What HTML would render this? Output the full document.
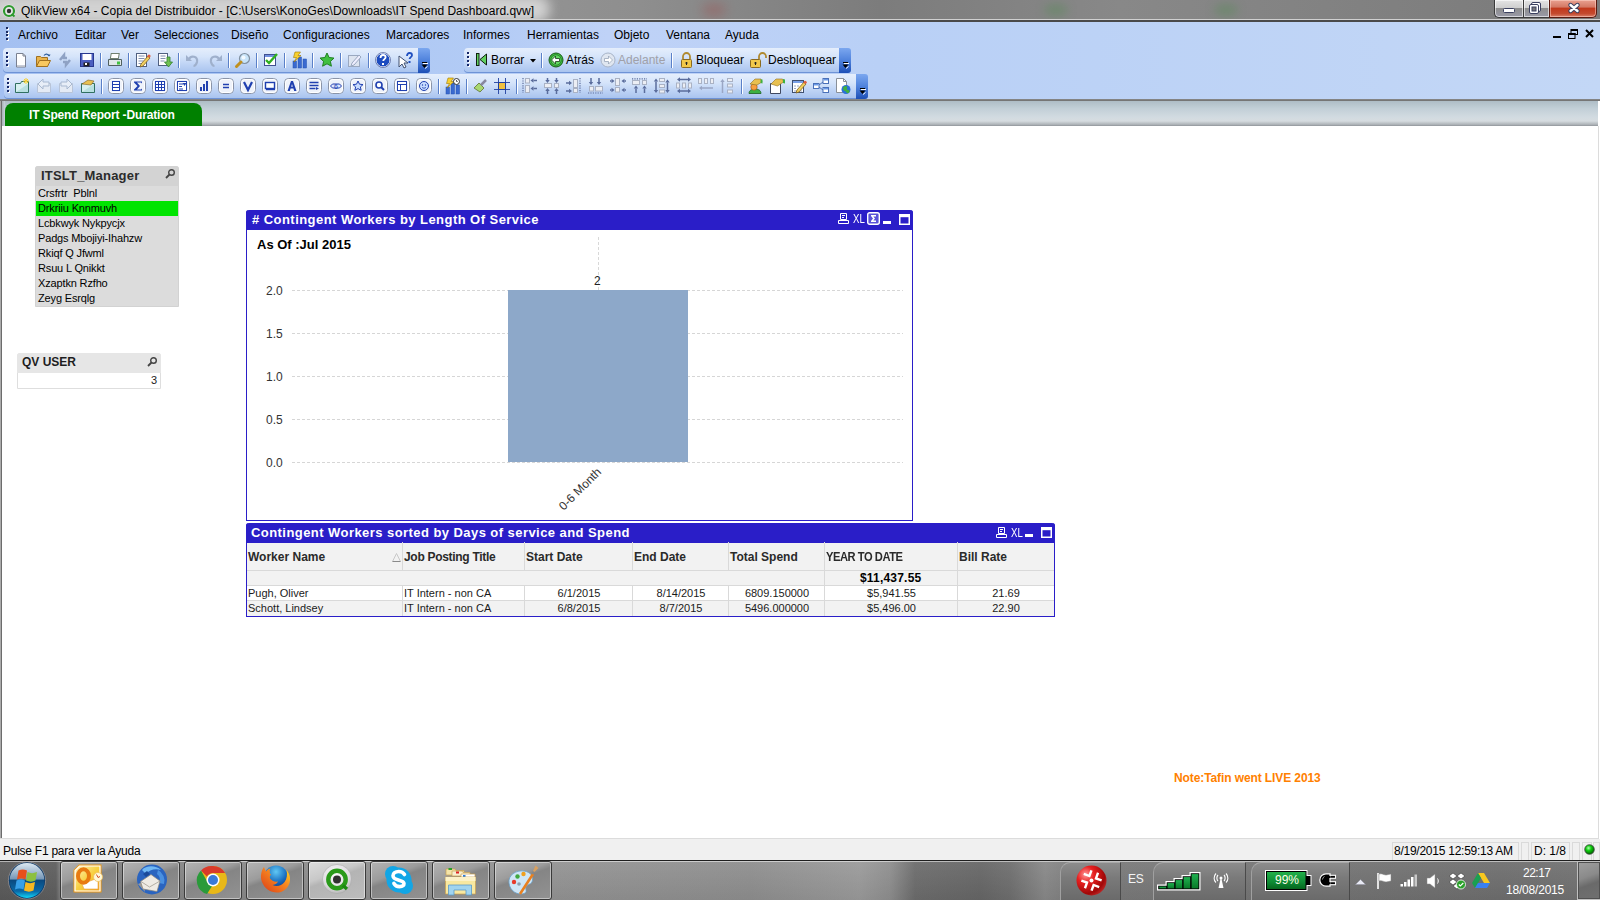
<!DOCTYPE html><html><head><meta charset="utf-8"><style>
*{margin:0;padding:0;box-sizing:border-box}
html,body{width:1600px;height:900px;overflow:hidden;background:#fff;font-family:"Liberation Sans",sans-serif;position:relative}
.a{position:absolute}
.t{position:absolute;white-space:nowrap;line-height:1}
svg{position:absolute;overflow:visible}
</style></head><body><div class="a" style="left:0;top:0;width:1600px;height:22px;overflow:hidden;background:linear-gradient(90deg,#a8a8a8 0,#8e8e8e 40%,#7c7c7c 55%,#888 70%,#7a7a7a 100%)"><div class="a" style="left:-10px;top:-5px;width:560px;height:28px;background:#d2d2d2;border-radius:14px;filter:blur(6px)"></div><div class="a" style="left:702px;top:4px;width:24px;height:12px;background:#9a5a5a;border-radius:50%;filter:blur(6px);opacity:.6"></div><div class="a" style="left:1044px;top:4px;width:24px;height:12px;background:#5a8a5a;border-radius:50%;filter:blur(5px);opacity:.5"></div><div class="a" style="left:1214px;top:4px;width:24px;height:12px;background:#5a8a5a;border-radius:50%;filter:blur(5px);opacity:.5"></div></div>
<div class="a" style="left:0px;top:19px;width:1600px;height:1px;background:#d0d0d0"></div>
<div class="a" style="left:0px;top:20px;width:1600px;height:2px;background:#4a4a4a"></div>
<svg style="left:2px;top:4px" width="14" height="14" viewBox="0 0 14 14"><circle cx="7" cy="7" r="6.5" fill="#e8e8e8"/><circle cx="7" cy="7" r="5" fill="none" stroke="#2e9a2e" stroke-width="2.2"/><circle cx="7" cy="7" r="2.2" fill="#333"/><path d="M9.5 10l3 2.5" stroke="#2e9a2e" stroke-width="2"/></svg>
<div class="t" style="left:21px;top:5px;font-size:12px;color:#000;font-weight:normal;">QlikView x64 - Copia del Distribuidor - [C:\Users\KonoGes\Downloads\IT Spend Dashboard.qvw]</div>
<div class="a" style="left:1494px;top:0px;width:29px;height:18px;border:1px solid #3a3a3a;border-top:none;border-right:none;border-radius:0 0 0 5px;background:linear-gradient(#e4e4e4 0,#cfcfcf 45%,#8e8e8e 50%,#9a9aa8 100%);box-shadow:inset 0 0 0 1px rgba(255,255,255,.6)"></div>
<div class="a" style="left:1523px;top:0px;width:26px;height:18px;border-bottom:1px solid #3a3a3a;border-left:1px solid #3a3a3a;background:linear-gradient(#e4e4e4 0,#cfcfcf 45%,#8e8e8e 50%,#9a9aa8 100%);box-shadow:inset 0 0 0 1px rgba(255,255,255,.6)"></div>
<div class="a" style="left:1549px;top:0px;width:48px;height:18px;border:1px solid #5a1a10;border-top:none;border-radius:0 0 5px 0;background:linear-gradient(#e9a090 0,#d47a66 40%,#c1391d 50%,#c44a2e 80%,#d9826c 100%);box-shadow:inset 0 0 0 1px rgba(255,220,210,.5)"></div>
<svg style="left:1503px;top:8px" width="12" height="5" viewBox="0 0 12 5"><rect x="0.5" y="0.5" width="11" height="4" rx="1" fill="#fff" stroke="#3b4060"/></svg>
<svg style="left:1529px;top:2px" width="12" height="12" viewBox="0 0 12 12"><rect x="2.5" y="0.5" width="9" height="9" rx="1.5" fill="#fff" stroke="#3b4060"/><rect x="0.5" y="2.5" width="9" height="9" rx="1.5" fill="#fff" stroke="#3b4060"/><rect x="3" y="5" width="4" height="4" fill="#777" stroke="#3b4060"/></svg>
<svg style="left:1568px;top:3px" width="12" height="10" viewBox="0 0 12 10"><path d="M2.5 2l7 6M9.5 2l-7 6" stroke="#3b4060" stroke-width="4.4" stroke-linecap="round"/><path d="M2.5 2l7 6M9.5 2l-7 6" stroke="#fff" stroke-width="2.4" stroke-linecap="round"/></svg>
<div class="a" style="left:0px;top:22px;width:1600px;height:77px;background:linear-gradient(90deg,#a4c0f1 0,#b2cbf5 30%,#bfd2f7 38%,#b9d0f6 55%,#c3d7f6 100%)"></div>
<div class="a" style="left:6px;top:27px;width:2px;height:2px;background:#1a2a60;box-shadow:1px 1px 0 #fff"></div>
<div class="a" style="left:6px;top:31px;width:2px;height:2px;background:#1a2a60;box-shadow:1px 1px 0 #fff"></div>
<div class="a" style="left:6px;top:34px;width:2px;height:2px;background:#1a2a60;box-shadow:1px 1px 0 #fff"></div>
<div class="a" style="left:6px;top:38px;width:2px;height:2px;background:#1a2a60;box-shadow:1px 1px 0 #fff"></div>
<div class="t" style="left:18px;top:29px;font-size:12px;color:#000;font-weight:normal;">Archivo</div>
<div class="t" style="left:75px;top:29px;font-size:12px;color:#000;font-weight:normal;">Editar</div>
<div class="t" style="left:121px;top:29px;font-size:12px;color:#000;font-weight:normal;">Ver</div>
<div class="t" style="left:154px;top:29px;font-size:12px;color:#000;font-weight:normal;">Selecciones</div>
<div class="t" style="left:231px;top:29px;font-size:12px;color:#000;font-weight:normal;">Diseño</div>
<div class="t" style="left:283px;top:29px;font-size:12px;color:#000;font-weight:normal;">Configuraciones</div>
<div class="t" style="left:386px;top:29px;font-size:12px;color:#000;font-weight:normal;">Marcadores</div>
<div class="t" style="left:463px;top:29px;font-size:12px;color:#000;font-weight:normal;">Informes</div>
<div class="t" style="left:527px;top:29px;font-size:12px;color:#000;font-weight:normal;">Herramientas</div>
<div class="t" style="left:614px;top:29px;font-size:12px;color:#000;font-weight:normal;">Objeto</div>
<div class="t" style="left:666px;top:29px;font-size:12px;color:#000;font-weight:normal;">Ventana</div>
<div class="t" style="left:725px;top:29px;font-size:12px;color:#000;font-weight:normal;">Ayuda</div>
<div class="a" style="left:1553px;top:36px;width:8px;height:2px;background:#000"></div>
<svg style="left:1568px;top:29px" width="10" height="10" viewBox="0 0 10 10"><rect x="3" y="0.5" width="6.5" height="5" fill="none" stroke="#000"/><rect x="3" y="0" width="7" height="2" fill="#000"/><rect x="0.5" y="4.5" width="6.5" height="5" fill="#c3d6f7" stroke="#000"/><rect x="0" y="4" width="7.5" height="2" fill="#000"/></svg>
<svg style="left:1585px;top:29px" width="9" height="9" viewBox="0 0 9 9"><path d="M1 1l7 7M8 1l-7 7" stroke="#000" stroke-width="2"/></svg>
<div class="a" style="left:3px;top:48px;width:416px;height:25px;background:linear-gradient(180deg,#e5eefc 0,#d5e4fa 35%,#c2d6f6 60%,#a7c2ee 100%);border-radius:4px 0 0 4px;box-shadow:inset 0 -1px 0 #6e93d6"></div>
<div class="a" style="left:6px;top:52px;width:2px;height:2px;background:#142668;box-shadow:1px 1px 0 #fff"></div>
<div class="a" style="left:6px;top:56px;width:2px;height:2px;background:#142668;box-shadow:1px 1px 0 #fff"></div>
<div class="a" style="left:6px;top:60px;width:2px;height:2px;background:#142668;box-shadow:1px 1px 0 #fff"></div>
<div class="a" style="left:6px;top:64px;width:2px;height:2px;background:#142668;box-shadow:1px 1px 0 #fff"></div>
<div class="a" style="left:418px;top:48px;width:12px;height:25px;background:linear-gradient(180deg,#7ba7ef 0,#4f82dc 50%,#1d4fb6 100%);border-radius:0 3px 3px 0"></div>
<div class="a" style="left:422px;top:62px;width:5px;height:1px;background:#000;box-shadow:1px 1px 0 #fff"></div>
<svg style="left:421px;top:64px" width="7" height="5" viewBox="0 0 7 5"><path d="M0.5 0.5h6l-3 3.5z" fill="#000"/><path d="M4 4.5l2.5-2" stroke="#fff"/></svg>
<div class="a" style="left:464px;top:48px;width:376px;height:25px;background:linear-gradient(180deg,#e5eefc 0,#d5e4fa 35%,#c2d6f6 60%,#a7c2ee 100%);border-radius:4px 0 0 4px;box-shadow:inset 0 -1px 0 #6e93d6"></div>
<div class="a" style="left:467px;top:52px;width:2px;height:2px;background:#142668;box-shadow:1px 1px 0 #fff"></div>
<div class="a" style="left:467px;top:56px;width:2px;height:2px;background:#142668;box-shadow:1px 1px 0 #fff"></div>
<div class="a" style="left:467px;top:60px;width:2px;height:2px;background:#142668;box-shadow:1px 1px 0 #fff"></div>
<div class="a" style="left:467px;top:64px;width:2px;height:2px;background:#142668;box-shadow:1px 1px 0 #fff"></div>
<div class="a" style="left:839px;top:48px;width:12px;height:25px;background:linear-gradient(180deg,#7ba7ef 0,#4f82dc 50%,#1d4fb6 100%);border-radius:0 3px 3px 0"></div>
<div class="a" style="left:843px;top:62px;width:5px;height:1px;background:#000;box-shadow:1px 1px 0 #fff"></div>
<svg style="left:842px;top:64px" width="7" height="5" viewBox="0 0 7 5"><path d="M0.5 0.5h6l-3 3.5z" fill="#000"/><path d="M4 4.5l2.5-2" stroke="#fff"/></svg>
<div class="a" style="left:4px;top:74px;width:853px;height:25px;background:linear-gradient(180deg,#e5eefc 0,#d5e4fa 35%,#c2d6f6 60%,#a7c2ee 100%);border-radius:4px 0 0 4px;box-shadow:inset 0 -1px 0 #6e93d6"></div>
<div class="a" style="left:7px;top:78px;width:2px;height:2px;background:#142668;box-shadow:1px 1px 0 #fff"></div>
<div class="a" style="left:7px;top:82px;width:2px;height:2px;background:#142668;box-shadow:1px 1px 0 #fff"></div>
<div class="a" style="left:7px;top:86px;width:2px;height:2px;background:#142668;box-shadow:1px 1px 0 #fff"></div>
<div class="a" style="left:7px;top:90px;width:2px;height:2px;background:#142668;box-shadow:1px 1px 0 #fff"></div>
<div class="a" style="left:856px;top:74px;width:12px;height:25px;background:linear-gradient(180deg,#7ba7ef 0,#4f82dc 50%,#1d4fb6 100%);border-radius:0 3px 3px 0"></div>
<div class="a" style="left:860px;top:88px;width:5px;height:1px;background:#000;box-shadow:1px 1px 0 #fff"></div>
<svg style="left:859px;top:90px" width="7" height="5" viewBox="0 0 7 5"><path d="M0.5 0.5h6l-3 3.5z" fill="#000"/><path d="M4 4.5l2.5-2" stroke="#fff"/></svg>
<svg style="left:13px;top:52px" width="16" height="16" viewBox="0 0 16 16"><path d="M3.5 1.5h6.5l2.5 2.5v11h-9z" fill="#fff" stroke="#7a8090"/><path d="M10 1.5v2.5h2.5" fill="none" stroke="#7a8090"/><path d="M4 13.5h8" stroke="#c8ccd8"/></svg>
<svg style="left:35px;top:52px" width="16" height="16" viewBox="0 0 16 16"><path d="M1.5 4.5h4l1 1h6v9h-11z" fill="#e9b44c" stroke="#a07020"/><path d="M1.5 14.5l3-6h11l-3 6z" fill="#f8c860" stroke="#a07020"/><path d="M9 3.5c1.5-2 4-2 5 0.5" fill="none" stroke="#3060a0" stroke-width="1.2"/><path d="M13 2.5l1.5 2 1-2" fill="#3060a0"/></svg>
<svg style="left:57px;top:52px" width="16" height="16" viewBox="0 0 16 16"><path d="M3 8l4-5v3h3M13 8l-4 5v-3h-3" fill="none" stroke="#8fa2c4" stroke-width="2.5"/></svg>
<svg style="left:79px;top:52px" width="16" height="16" viewBox="0 0 16 16"><rect x="1.5" y="1.5" width="13" height="13" fill="#4c5fc0" stroke="#283890"/><rect x="3.5" y="2" width="9" height="6" fill="#fff"/><rect x="4.5" y="10.5" width="6" height="4" fill="#222"/><rect x="6" y="11" width="2" height="2" fill="#fff"/></svg>
<div class="a" style="left:100px;top:53px;width:1px;height:15px;background:#5a80c8;box-shadow:1px 0 0 #fff"></div>
<svg style="left:107px;top:52px" width="16" height="16" viewBox="0 0 16 16"><rect x="4.5" y="1.5" width="8" height="5" fill="#fff" stroke="#708070" transform="skewX(-10)"/><path d="M1.5 7.5h13v6h-13z" fill="#dfe8e8" stroke="#506060"/><rect x="10" y="9.5" width="3" height="3" fill="#40c040"/></svg>
<div class="a" style="left:128px;top:53px;width:1px;height:15px;background:#5a80c8;box-shadow:1px 0 0 #fff"></div>
<svg style="left:135px;top:52px" width="16" height="16" viewBox="0 0 16 16"><rect x="1.5" y="1.5" width="10" height="13" fill="#fff" stroke="#506080"/><path d="M3.5 4h6M3.5 6.5h6M3.5 9h5M3.5 11.5h5" stroke="#8090b0"/><path d="M6 12l7-8 2 2-7 8-3 1z" fill="#f0d060" stroke="#806020" stroke-width=".8"/><circle cx="14" cy="4" r="1.6" fill="#e06040"/></svg>
<svg style="left:157px;top:52px" width="16" height="16" viewBox="0 0 16 16"><rect x="1.5" y="1.5" width="9" height="12" fill="#fff" stroke="#506080"/><path d="M3.5 4h5M3.5 6.5h5M3.5 9h4" stroke="#8090b0"/><path d="M10 5h3v5h2.5l-4 5-4-5h2.5z" fill="#70c050" stroke="#308030" stroke-width=".8"/></svg>
<div class="a" style="left:178px;top:53px;width:1px;height:15px;background:#5a80c8;box-shadow:1px 0 0 #fff"></div>
<svg style="left:185px;top:52px" width="16" height="16" viewBox="0 0 16 16"><path d="M4 7c2-4 9-3 8 3-.5 2-2 4-3.5 4" fill="none" stroke="#9fb0cc" stroke-width="2.2"/><path d="M1 3v6h6z" fill="#9fb0cc"/></svg>
<svg style="left:207px;top:52px" width="16" height="16" viewBox="0 0 16 16"><path d="M12 7c-2-4-9-3-8 3 .5 2 2 4 3.5 4" fill="none" stroke="#9fb0cc" stroke-width="2.2"/><path d="M15 3v6h-6z" fill="#9fb0cc"/></svg>
<div class="a" style="left:228px;top:53px;width:1px;height:15px;background:#5a80c8;box-shadow:1px 0 0 #fff"></div>
<svg style="left:235px;top:52px" width="16" height="16" viewBox="0 0 16 16"><circle cx="9.5" cy="6.5" r="5" fill="#c8e4fa" stroke="#8090a0" stroke-width="1.2"/><circle cx="8.5" cy="5.5" r="2" fill="#fff" opacity=".8"/><path d="M6 10l-4.5 4.5" stroke="#c09020" stroke-width="3" stroke-linecap="round"/></svg>
<div class="a" style="left:256px;top:53px;width:1px;height:15px;background:#5a80c8;box-shadow:1px 0 0 #fff"></div>
<svg style="left:263px;top:52px" width="16" height="16" viewBox="0 0 16 16"><rect x="1.5" y="2.5" width="11" height="11" fill="#fff" stroke="#405090"/><rect x="2" y="3" width="10" height="2" fill="#7090e0"/><path d="M3 8l3 3 8-9" fill="none" stroke="#30b020" stroke-width="2.4"/></svg>
<div class="a" style="left:284px;top:53px;width:1px;height:15px;background:#5a80c8;box-shadow:1px 0 0 #fff"></div>
<svg style="left:291px;top:52px" width="16" height="16" viewBox="0 0 16 16"><rect x="2" y="9" width="3.5" height="7" fill="#3a6ad0" stroke="#2050b0" stroke-width=".5"/><rect x="7" y="5" width="3.5" height="11" fill="#3a6ad0" stroke="#2050b0" stroke-width=".5"/><rect x="12" y="7" width="3.5" height="9" fill="#3a6ad0" stroke="#2050b0" stroke-width=".5"/><path d="M4 0h5.5l-2.5 3.5h3l-7 6.5 2.5-4.5H2.5z" fill="#f8d030" stroke="#a07800" stroke-width=".6"/></svg>
<div class="a" style="left:312px;top:53px;width:1px;height:15px;background:#5a80c8;box-shadow:1px 0 0 #fff"></div>
<svg style="left:319px;top:52px" width="16" height="16" viewBox="0 0 16 16"><path d="M8 1l2.1 4.5 4.9.6-3.6 3.3 1 4.8L8 11.8 3.6 14.2l1-4.8L1 6.1l4.9-.6z" fill="#40c040" stroke="#208020"/></svg>
<div class="a" style="left:340px;top:53px;width:1px;height:15px;background:#5a80c8;box-shadow:1px 0 0 #fff"></div>
<svg style="left:347px;top:52px" width="16" height="16" viewBox="0 0 16 16"><rect x="1.5" y="3.5" width="11" height="11" fill="#dde4f0" stroke="#9aa8c0"/><path d="M5 11l7-8 2 2-7 8-3 1z" fill="#eef" stroke="#9aa8c0"/></svg>
<div class="a" style="left:368px;top:53px;width:1px;height:15px;background:#5a80c8;box-shadow:1px 0 0 #fff"></div>
<svg style="left:375px;top:52px" width="16" height="16" viewBox="0 0 16 16"><circle cx="8" cy="8" r="7" fill="#1c4cc0" stroke="#fff" stroke-width="1"/><circle cx="8" cy="8" r="7.5" fill="none" stroke="#283c80" stroke-width=".6"/><path d="M5.5 6c0-2 1-3 2.5-3s2.6 1 2.6 2.3c0 1.6-2.4 2-2.4 3.7" fill="none" stroke="#fff" stroke-width="1.8"/><rect x="7" y="11" width="2" height="2" fill="#fff"/></svg>
<svg style="left:398px;top:52px" width="16" height="16" viewBox="0 0 16 16"><path d="M1 4v11l3-3 2 4 2-1-2-4h4z" fill="#fff" stroke="#405070"/><path d="M9 4c0-2 1-3 2.5-3S14 2 14 3.3c0 1.6-2.4 2-2.4 3.7" fill="none" stroke="#2050c0" stroke-width="1.8"/><rect x="10.5" y="9" width="2" height="2" fill="#2050c0"/></svg>
<svg style="left:476px;top:53px" width="12" height="13" viewBox="0 0 12 13"><rect x="0.5" y="0.5" width="2.5" height="12" fill="#60d060" stroke="#102010"/><path d="M10.5 1v11L4 6.5z" fill="#60d060" stroke="#102010"/></svg>
<div class="t" style="left:491px;top:54px;font-size:12px;color:#000;font-weight:normal;">Borrar</div>
<svg style="left:530px;top:59px" width="6" height="4" viewBox="0 0 6 4"><path d="M0 0h6l-3 3.5z" fill="#000"/></svg>
<div class="a" style="left:541px;top:53px;width:1px;height:15px;background:#5a80c8;box-shadow:1px 0 0 #fff"></div>
<svg style="left:548px;top:52px" width="16" height="16" viewBox="0 0 16 16"><circle cx="8" cy="8" r="7" fill="#3cbc3c" stroke="#1a5a1a"/><circle cx="8" cy="8" r="5.2" fill="#60d860" stroke="#1a5a1a" stroke-width=".6"/><path d="M3.5 8l4-4v2.5h4v3h-4v2.5z" fill="#fff" stroke="#1a3a1a" stroke-width=".8"/></svg>
<div class="t" style="left:566px;top:54px;font-size:12px;color:#000;font-weight:normal;">Atrás</div>
<svg style="left:600px;top:52px" width="16" height="16" viewBox="0 0 16 16"><circle cx="8" cy="8" r="7" fill="#dfe6f0" stroke="#a8b4c8"/><path d="M12.5 8l-4-4v2.5h-4v3h4v2.5z" fill="#fff" stroke="#98a4b8" stroke-width=".8"/></svg>
<div class="t" style="left:618px;top:54px;font-size:12px;color:#a0a0a8;font-weight:normal;">Adelante</div>
<div class="a" style="left:671px;top:53px;width:1px;height:15px;background:#5a80c8;box-shadow:1px 0 0 #fff"></div>
<svg style="left:680px;top:52px" width="13" height="16" viewBox="0 0 13 16"><path d="M3 7V4.5a3.5 3.5 0 0 1 7 0V7" fill="none" stroke="#b08a30" stroke-width="1.8"/><rect x="1.5" y="7.5" width="10" height="8" rx="1" fill="#f2c94a" stroke="#8a6a20"/><path d="M6.5 10v3M5.3 11h2.4" stroke="#222"/></svg>
<div class="t" style="left:696px;top:54px;font-size:12px;color:#000;font-weight:normal;">Bloquear</div>
<svg style="left:750px;top:52px" width="17" height="16" viewBox="0 0 17 16"><path d="M9 7V4.5a3.5 3.5 0 0 1 7 0V6" fill="none" stroke="#b08a30" stroke-width="1.8"/><rect x="0.5" y="7.5" width="10" height="8" rx="1" fill="#f2c94a" stroke="#8a6a20"/><path d="M5.5 10v3M4.3 11h2.4" stroke="#222"/></svg>
<div class="t" style="left:768px;top:54px;font-size:12px;color:#000;font-weight:normal;">Desbloquear</div>
<svg style="left:14px;top:78px" width="16" height="16" viewBox="0 0 16 16"><path d="M1.5 5.5h5l1-2h7v11h-13z" fill="#d8f0f0" stroke="#307060"/><path d="M2 14l12-8v8z" fill="#b8e0e0"/><path d="M12 0v6M9 3h6M10 1l4 4M14 1l-4 4" stroke="#f8d030" stroke-width="1"/></svg>
<svg style="left:36px;top:78px" width="16" height="16" viewBox="0 0 16 16"><path d="M1.5 5.5h13v9h-13z" fill="#e4eaf4" stroke="#b8c4d8"/><path d="M2 6l5-5v3h6v4h-6v3z" fill="#e8eef8" stroke="#a8b8d0"/></svg>
<svg style="left:58px;top:78px" width="16" height="16" viewBox="0 0 16 16"><path d="M1.5 5.5h13v9h-13z" fill="#e4eaf4" stroke="#b8c4d8"/><path d="M14 6l-5-5v3h-6v4h6v3z" fill="#e8eef8" stroke="#a8b8d0"/></svg>
<svg style="left:80px;top:78px" width="16" height="16" viewBox="0 0 16 16"><path d="M1.5 5.5h13v9h-13z" fill="#d8f0f0" stroke="#307060"/><path d="M2 14l12-8v8z" fill="#b8e0e0"/><path d="M2 6l6-4 6 1-3 4z" fill="#e8c050" stroke="#806020" stroke-width=".6"/></svg>
<div class="a" style="left:101px;top:79px;width:1px;height:15px;background:#5a80c8;box-shadow:1px 0 0 #fff"></div>
<svg style="left:108px;top:78px" width="16" height="16" viewBox="0 0 16 16"><rect x="0.5" y="0.5" width="15" height="15" rx="4" fill="#eef2fa" stroke="#8a94a8"/><rect x="1.5" y="1.5" width="13" height="13" rx="3" fill="none" stroke="#fff"/><rect x="4.5" y="3.5" width="7" height="9" fill="#fff" stroke="#2040b0"/><path d="M5 6.5h6M5 9.5h6" stroke="#2040b0"/></svg>
<svg style="left:130px;top:78px" width="16" height="16" viewBox="0 0 16 16"><rect x="0.5" y="0.5" width="15" height="15" rx="4" fill="#eef2fa" stroke="#8a94a8"/><rect x="1.5" y="1.5" width="13" height="13" rx="3" fill="none" stroke="#fff"/><path d="M4 3.5h8v2l-1-1H7l3 3.5-3 3.5h4l1-1v2H4v-1l3.5-3.5L4 4.5z" fill="#2040b0"/></svg>
<svg style="left:152px;top:78px" width="16" height="16" viewBox="0 0 16 16"><rect x="0.5" y="0.5" width="15" height="15" rx="4" fill="#eef2fa" stroke="#8a94a8"/><rect x="1.5" y="1.5" width="13" height="13" rx="3" fill="none" stroke="#fff"/><rect x="3.5" y="3.5" width="9" height="9" fill="#fff" stroke="#2040b0"/><path d="M6.5 4v8M9.5 4v8M4 6.5h8M4 9.5h8" stroke="#2040b0"/></svg>
<svg style="left:174px;top:78px" width="16" height="16" viewBox="0 0 16 16"><rect x="0.5" y="0.5" width="15" height="15" rx="4" fill="#eef2fa" stroke="#8a94a8"/><rect x="1.5" y="1.5" width="13" height="13" rx="3" fill="none" stroke="#fff"/><rect x="3.5" y="3.5" width="9" height="9" fill="#fff" stroke="#2040b0"/><path d="M5 6h4M5 8.5h3M5 11h4" stroke="#2040b0"/><path d="M8.5 5h4l-2 3z" fill="#2040b0"/></svg>
<svg style="left:196px;top:78px" width="16" height="16" viewBox="0 0 16 16"><rect x="0.5" y="0.5" width="15" height="15" rx="4" fill="#eef2fa" stroke="#8a94a8"/><rect x="1.5" y="1.5" width="13" height="13" rx="3" fill="none" stroke="#fff"/><rect x="4" y="9" width="2" height="4" fill="#2040b0"/><rect x="7" y="6" width="2" height="7" fill="#2040b0"/><rect x="10" y="3" width="2" height="10" fill="#2040b0"/></svg>
<svg style="left:218px;top:78px" width="16" height="16" viewBox="0 0 16 16"><rect x="0.5" y="0.5" width="15" height="15" rx="4" fill="#eef2fa" stroke="#8a94a8"/><rect x="1.5" y="1.5" width="13" height="13" rx="3" fill="none" stroke="#fff"/><path d="M5 6.5h6M5 9.5h6" stroke="#2040b0" stroke-width="1.6"/></svg>
<svg style="left:240px;top:78px" width="16" height="16" viewBox="0 0 16 16"><rect x="0.5" y="0.5" width="15" height="15" rx="4" fill="#eef2fa" stroke="#8a94a8"/><rect x="1.5" y="1.5" width="13" height="13" rx="3" fill="none" stroke="#fff"/><path d="M4 4l4 8 4-8" fill="none" stroke="#2040b0" stroke-width="2.2"/></svg>
<svg style="left:262px;top:78px" width="16" height="16" viewBox="0 0 16 16"><rect x="0.5" y="0.5" width="15" height="15" rx="4" fill="#eef2fa" stroke="#8a94a8"/><rect x="1.5" y="1.5" width="13" height="13" rx="3" fill="none" stroke="#fff"/><rect x="3.5" y="4.5" width="9" height="6" fill="#fff" stroke="#2040b0" stroke-width="1.4"/><path d="M4 11.5h9" stroke="#2040b0" stroke-width="1.4"/></svg>
<svg style="left:284px;top:78px" width="16" height="16" viewBox="0 0 16 16"><rect x="0.5" y="0.5" width="15" height="15" rx="4" fill="#eef2fa" stroke="#8a94a8"/><rect x="1.5" y="1.5" width="13" height="13" rx="3" fill="none" stroke="#fff"/><path d="M3.5 13L7 3h2l3.5 10h-2.3l-.8-2.5H6.6L5.8 13zM7.2 8.7h1.6L8 6z" fill="#2040b0"/></svg>
<svg style="left:306px;top:78px" width="16" height="16" viewBox="0 0 16 16"><rect x="0.5" y="0.5" width="15" height="15" rx="4" fill="#eef2fa" stroke="#8a94a8"/><rect x="1.5" y="1.5" width="13" height="13" rx="3" fill="none" stroke="#fff"/><path d="M3.5 4.5h9M3.5 7.5h9M3.5 10.5h6" stroke="#2040b0" stroke-width="1.3"/><path d="M10 9l3 1.5-3 1.5z" fill="#2040b0"/></svg>
<svg style="left:328px;top:78px" width="16" height="16" viewBox="0 0 16 16"><rect x="0.5" y="0.5" width="15" height="15" rx="4" fill="#eef2fa" stroke="#8a94a8"/><rect x="1.5" y="1.5" width="13" height="13" rx="3" fill="none" stroke="#fff"/><path d="M2.5 8l2-2h7l2 2-2 2h-7z" fill="#dde6ff" stroke="#2040b0"/><text x="8" y="10.5" font-size="7" text-anchor="middle" fill="#2040b0" font-family="Liberation Sans">6</text></svg>
<svg style="left:350px;top:78px" width="16" height="16" viewBox="0 0 16 16"><rect x="0.5" y="0.5" width="15" height="15" rx="4" fill="#eef2fa" stroke="#8a94a8"/><rect x="1.5" y="1.5" width="13" height="13" rx="3" fill="none" stroke="#fff"/><path d="M8 3l1.5 3.2 3.5.4-2.6 2.3.7 3.4L8 10.6l-3.1 1.7.7-3.4L3 6.6l3.5-.4z" fill="#c8dcff" stroke="#2040b0"/></svg>
<svg style="left:372px;top:78px" width="16" height="16" viewBox="0 0 16 16"><rect x="0.5" y="0.5" width="15" height="15" rx="4" fill="#eef2fa" stroke="#8a94a8"/><rect x="1.5" y="1.5" width="13" height="13" rx="3" fill="none" stroke="#fff"/><circle cx="7" cy="7" r="3" fill="#fff" stroke="#2040b0" stroke-width="1.6"/><path d="M9 9l3 3" stroke="#2040b0" stroke-width="2"/></svg>
<svg style="left:394px;top:78px" width="16" height="16" viewBox="0 0 16 16"><rect x="0.5" y="0.5" width="15" height="15" rx="4" fill="#eef2fa" stroke="#8a94a8"/><rect x="1.5" y="1.5" width="13" height="13" rx="3" fill="none" stroke="#fff"/><rect x="3.5" y="3.5" width="9" height="9" fill="#fff" stroke="#2040b0"/><path d="M4 6.5h8M6.5 7v5" stroke="#2040b0"/></svg>
<svg style="left:416px;top:78px" width="16" height="16" viewBox="0 0 16 16"><rect x="0.5" y="0.5" width="15" height="15" rx="4" fill="#eef2fa" stroke="#8a94a8"/><rect x="1.5" y="1.5" width="13" height="13" rx="3" fill="none" stroke="#fff"/><circle cx="8" cy="8" r="4.5" fill="#c8dcff" stroke="#2040b0"/><circle cx="6.5" cy="7" r=".7" fill="#2040b0"/><circle cx="9.5" cy="7" r=".7" fill="#2040b0"/><path d="M6 9.3c1 1.2 3 1.2 4 0" fill="none" stroke="#2040b0" stroke-width=".8"/></svg>
<div class="a" style="left:438px;top:79px;width:1px;height:15px;background:#5a80c8;box-shadow:1px 0 0 #fff"></div>
<svg style="left:444px;top:78px" width="16" height="16" viewBox="0 0 16 16"><rect x="2" y="9" width="3.5" height="7" fill="#3a6ad0" stroke="#2050b0" stroke-width=".5"/><rect x="7" y="5" width="3.5" height="11" fill="#3a6ad0" stroke="#2050b0" stroke-width=".5"/><rect x="12" y="7" width="3.5" height="9" fill="#3a6ad0" stroke="#2050b0" stroke-width=".5"/><path d="M4 0h5.5l-2.5 3.5h3l-7 6.5 2.5-4.5H2.5z" fill="#f8d030" stroke="#a07800" stroke-width=".6"/><circle cx="12.5" cy="3.5" r="3" fill="#fff" stroke="#333"/><path d="M12.5 2v1.5h1.2" stroke="#333" stroke-width=".8" fill="none"/></svg>
<div class="a" style="left:466px;top:79px;width:1px;height:15px;background:#5a80c8;box-shadow:1px 0 0 #fff"></div>
<svg style="left:472px;top:78px" width="16" height="16" viewBox="0 0 16 16"><path d="M2 10l5-5 5 5-4 4z" fill="#a8d870" stroke="#607030" stroke-width=".8"/><path d="M9 7l5-5" stroke="#8888a0" stroke-width="2.5"/></svg>
<svg style="left:494px;top:78px" width="16" height="16" viewBox="0 0 16 16"><rect x="4.5" y="4.5" width="7" height="7" fill="#f0c040" stroke="#2040a0"/><path d="M4.5 0v16M11.5 0v16M0 4.5h16M0 11.5h16" stroke="#2040a0" stroke-width=".9"/></svg>
<div class="a" style="left:516px;top:79px;width:1px;height:15px;background:#5a80c8;box-shadow:1px 0 0 #fff"></div>
<svg style="left:522px;top:78px" width="16" height="16" viewBox="0 0 16 16"><path d="M1 0L1 15" stroke="#5a6c9c" stroke-width="1.2" stroke-dasharray="1.2 1.2"/><rect x="3.5" y="0.5" width="4" height="4.5" fill="#eceef4" stroke="#aab2c4"/><rect x="3.5" y="7.5" width="4" height="7" fill="#eceef4" stroke="#aab2c4"/><path d="M15 2.5L11.5 2.5" stroke="#5a6c9c" stroke-width="1.5"/><path d="M8.5 2.5L11.5 0.2999999999999998L11.5 4.7z" fill="#5a6c9c"/><path d="M15 10.5L11.5 10.5" stroke="#5a6c9c" stroke-width="1.5"/><path d="M8.5 10.5L11.5 8.3L11.5 12.7z" fill="#5a6c9c"/></svg>
<svg style="left:544px;top:78px" width="16" height="16" viewBox="0 0 16 16"><path d="M3.5 0L3.5 2.0" stroke="#5a6c9c" stroke-width="1.5"/><path d="M3.5 5L1.2999999999999998 2.0L5.7 2.0z" fill="#5a6c9c"/><path d="M12.5 0L12.5 2.0" stroke="#5a6c9c" stroke-width="1.5"/><path d="M12.5 5L10.3 2.0L14.7 2.0z" fill="#5a6c9c"/><rect x="0.5" y="5.5" width="7" height="4" fill="#eceef4" stroke="#aab2c4"/><rect x="10.5" y="5.5" width="4" height="4" fill="#eceef4" stroke="#aab2c4"/><path d="M3.5 16L3.5 13.0" stroke="#5a6c9c" stroke-width="1.5"/><path d="M3.5 10L5.7 13.0L1.2999999999999998 13.0z" fill="#5a6c9c"/><path d="M12.5 16L12.5 13.0" stroke="#5a6c9c" stroke-width="1.5"/><path d="M12.5 10L14.7 13.0L10.3 13.0z" fill="#5a6c9c"/></svg>
<svg style="left:566px;top:78px" width="16" height="16" viewBox="0 0 16 16"><path d="M0 5L3.0 5.0" stroke="#5a6c9c" stroke-width="1.5"/><path d="M6 5L3.0 7.2L3.0 2.8z" fill="#5a6c9c"/><path d="M0 13L3.0 13.0" stroke="#5a6c9c" stroke-width="1.5"/><path d="M6 13L3.0 15.2L3.0 10.8z" fill="#5a6c9c"/><rect x="7.5" y="1.5" width="4" height="8" fill="#eceef4" stroke="#aab2c4"/><rect x="7.5" y="10.5" width="4" height="4" fill="#eceef4" stroke="#aab2c4"/><path d="M14 0L14 15" stroke="#5a6c9c" stroke-width="1.2" stroke-dasharray="1.2 1.2"/></svg>
<svg style="left:588px;top:78px" width="16" height="16" viewBox="0 0 16 16"><path d="M3 0L3.0 4.0" stroke="#5a6c9c" stroke-width="1.5"/><path d="M3 7L0.7999999999999998 4.0L5.2 4.0z" fill="#5a6c9c"/><path d="M11 0L11.0 4.0" stroke="#5a6c9c" stroke-width="1.5"/><path d="M11 7L8.8 4.0L13.2 4.0z" fill="#5a6c9c"/><rect x="1.5" y="8.5" width="4" height="4.5" fill="#eceef4" stroke="#aab2c4"/><rect x="7.5" y="8.5" width="7" height="4.5" fill="#eceef4" stroke="#aab2c4"/><path d="M0 15L15 15" stroke="#5a6c9c" stroke-width="1.2" stroke-dasharray="1.2 1.2"/></svg>
<svg style="left:610px;top:78px" width="16" height="16" viewBox="0 0 16 16"><path d="M0 3L1.5 3.0" stroke="#5a6c9c" stroke-width="1.5"/><path d="M4.5 3L1.5 5.2L1.5 0.7999999999999998z" fill="#5a6c9c"/><path d="M16 3L14.5 3.0" stroke="#5a6c9c" stroke-width="1.5"/><path d="M11.5 3L14.5 0.7999999999999998L14.5 5.2z" fill="#5a6c9c"/><rect x="5.5" y="0.5" width="4" height="7" fill="#eceef4" stroke="#aab2c4"/><path d="M0 12L1.5 12.0" stroke="#5a6c9c" stroke-width="1.5"/><path d="M4.5 12L1.5 14.2L1.5 9.8z" fill="#5a6c9c"/><path d="M16 12L14.5 12.0" stroke="#5a6c9c" stroke-width="1.5"/><path d="M11.5 12L14.5 9.8L14.5 14.2z" fill="#5a6c9c"/><rect x="5.5" y="9.5" width="4" height="4.5" fill="#eceef4" stroke="#aab2c4"/></svg>
<svg style="left:632px;top:78px" width="16" height="16" viewBox="0 0 16 16"><path d="M0 0.8L15 0.8" stroke="#5a6c9c" stroke-width="1.2" stroke-dasharray="1.2 1.2"/><rect x="0.5" y="2.5" width="7" height="4" fill="#eceef4" stroke="#aab2c4"/><rect x="10.5" y="2.5" width="4" height="4" fill="#eceef4" stroke="#aab2c4"/><path d="M4 15L4.0 10.5" stroke="#5a6c9c" stroke-width="1.5"/><path d="M4 7.5L6.2 10.5L1.7999999999999998 10.5z" fill="#5a6c9c"/><path d="M12.5 15L12.5 10.5" stroke="#5a6c9c" stroke-width="1.5"/><path d="M12.5 7.5L14.7 10.5L10.3 10.5z" fill="#5a6c9c"/></svg>
<svg style="left:654px;top:78px" width="16" height="16" viewBox="0 0 16 16"><path d="M2 8L2.0 3.5" stroke="#5a6c9c" stroke-width="1.5"/><path d="M2 0.5L4.2 3.5L-0.20000000000000018 3.5z" fill="#5a6c9c"/><path d="M2 8L2.0 12.0" stroke="#5a6c9c" stroke-width="1.5"/><path d="M2 15L-0.20000000000000018 12.0L4.2 12.0z" fill="#5a6c9c"/><path d="M13.5 8L13.5 4.5" stroke="#5a6c9c" stroke-width="1.5"/><path d="M13.5 1.5L15.7 4.5L11.3 4.5z" fill="#5a6c9c"/><path d="M13.5 8L13.5 12.0" stroke="#5a6c9c" stroke-width="1.5"/><path d="M13.5 15L11.3 12.0L15.7 12.0z" fill="#5a6c9c"/><rect x="5.5" y="0.5" width="5" height="3" fill="#eceef4" stroke="#aab2c4"/><rect x="5.5" y="6.5" width="5" height="3" fill="#eceef4" stroke="#aab2c4"/><rect x="5.5" y="12" width="5" height="3" fill="#eceef4" stroke="#aab2c4"/></svg>
<svg style="left:676px;top:78px" width="16" height="16" viewBox="0 0 16 16"><path d="M8 1.5L4.0 1.5" stroke="#5a6c9c" stroke-width="1.5"/><path d="M1 1.5L4.0 -0.7000000000000002L4.0 3.7z" fill="#5a6c9c"/><path d="M8 1.5L12.0 1.5" stroke="#5a6c9c" stroke-width="1.5"/><path d="M15 1.5L12.0 3.7L12.0 -0.7000000000000002z" fill="#5a6c9c"/><path d="M8 13L4.0 13.0" stroke="#5a6c9c" stroke-width="1.5"/><path d="M1 13L4.0 10.8L4.0 15.2z" fill="#5a6c9c"/><path d="M8 13L12.0 13.0" stroke="#5a6c9c" stroke-width="1.5"/><path d="M15 13L12.0 15.2L12.0 10.8z" fill="#5a6c9c"/><rect x="0.5" y="5" width="3" height="5" fill="#eceef4" stroke="#aab2c4"/><rect x="6.5" y="5" width="3" height="5" fill="#eceef4" stroke="#aab2c4"/><rect x="12.5" y="5" width="3" height="5" fill="#eceef4" stroke="#aab2c4"/></svg>
<svg style="left:698px;top:78px" width="16" height="16" viewBox="0 0 16 16"><rect x="0.5" y="0.5" width="3" height="5" fill="#eceef4" stroke="#aab2c4"/><rect x="6.5" y="0.5" width="3" height="5" fill="#eceef4" stroke="#aab2c4"/><rect x="12.5" y="0.5" width="3" height="5" fill="#eceef4" stroke="#aab2c4"/><path d="M15 10L4.0 10.0" stroke="#9aa6c4" stroke-width="1.5"/><path d="M1 10L4.0 7.8L4.0 12.2z" fill="#9aa6c4"/></svg>
<svg style="left:720px;top:78px" width="16" height="16" viewBox="0 0 16 16"><path d="M2.5 15L2.5 4.0" stroke="#9aa6c4" stroke-width="1.5"/><path d="M2.5 1L4.7 4.0L0.2999999999999998 4.0z" fill="#9aa6c4"/><rect x="7.5" y="0.5" width="5" height="3" fill="#eceef4" stroke="#aab2c4"/><rect x="7.5" y="6" width="5" height="3" fill="#eceef4" stroke="#aab2c4"/><rect x="7.5" y="12" width="5" height="3" fill="#eceef4" stroke="#aab2c4"/></svg>
<div class="a" style="left:741px;top:79px;width:1px;height:15px;background:#5a80c8;box-shadow:1px 0 0 #fff"></div>
<svg style="left:747px;top:78px" width="16" height="16" viewBox="0 0 16 16"><path d="M2 15.5c0-3 2.5-4.5 6-4.5s6 1.5 6 4.5z" fill="#3cb043" stroke="#1a6020" stroke-width=".8"/><circle cx="7" cy="9" r="3.2" fill="#f6a040" stroke="#a05010" stroke-width=".6"/><path d="M3 6l5-5h6l1 3-5 3z" fill="#e8c050" stroke="#907020" stroke-width=".6"/><path d="M13.5 1.5l2 0v4l-2-.5z" fill="#40b040"/></svg>
<svg style="left:769px;top:78px" width="16" height="16" viewBox="0 0 16 16"><path d="M1.5 5.5h10v10h-10z" fill="#fff" stroke="#404860"/><path d="M2 6l5-5h6.5l1 3-6 4z" fill="#e8c050" stroke="#907020" stroke-width=".6"/><path d="M14 1l2 .5v4l-2-.5z" fill="#40b040"/></svg>
<svg style="left:791px;top:78px" width="16" height="16" viewBox="0 0 16 16"><rect x="1.5" y="2.5" width="11" height="12" fill="#fff" stroke="#405070"/><rect x="2" y="3" width="10" height="2" fill="#7aa0e8"/><path d="M3 8h2M6 8h2M3 10.5h2M3 13h5M9 13h2" stroke="#98a8c8"/><path d="M6 12l7-8 2 2-7 8-3 1z" fill="#f0d060" stroke="#806020" stroke-width=".8"/><circle cx="14.2" cy="4.2" r="1.5" fill="#e06040"/></svg>
<svg style="left:813px;top:78px" width="16" height="16" viewBox="0 0 16 16"><rect x="0.5" y="5.5" width="5.5" height="5" fill="#fff" stroke="#4a70b8"/><rect x="1" y="6" width="4.5" height="1.5" fill="#6a9ae8"/><rect x="10" y="0.5" width="5.5" height="5" fill="#fff" stroke="#4a70b8"/><rect x="10.5" y="1" width="4.5" height="1.5" fill="#6a9ae8"/><rect x="10" y="9.5" width="5.5" height="5" fill="#fff" stroke="#4a70b8"/><rect x="10.5" y="10" width="4.5" height="1.5" fill="#6a9ae8"/><path d="M6 7l4-3M6 9l4 3" stroke="#4a70b8"/></svg>
<svg style="left:835px;top:78px" width="16" height="16" viewBox="0 0 16 16"><path d="M1.5 0.5h7l3 3v11h-10z" fill="#fff" stroke="#8a9098"/><path d="M8.5 0.5v3h3" fill="none" stroke="#8a9098"/><circle cx="11" cy="11.5" r="4.5" fill="#2a70d8"/><path d="M8 9.5c1-1.5 3-2 4-1s-1 2 0 3 2 0 2.5 1.5-1.5 2.5-2.5 2-1-2-2-2-2-1-2-3.5z" fill="#40b040"/></svg>
<div class="a" style="left:0px;top:99px;width:1600px;height:2px;background:linear-gradient(#8b8b8b,#6f6f6f)"></div>
<div class="a" style="left:0px;top:101px;width:1598px;height:25px;background:linear-gradient(180deg,#aebdc6 0,#c2cfd7 30%,#d2dbe1 65%,#d6dce0 80%,#a8adb2 96%,#8c9196 100%)"></div>
<div class="a" style="left:0px;top:101px;width:2px;height:737px;background:linear-gradient(90deg,#ababab 0,#ababab 1px,#6c6c6c 1px)"></div>
<div class="a" style="left:2px;top:101px;width:3px;height:25px;background:linear-gradient(90deg,#a9b2b8,#c9d2d9)"></div>
<div class="a" style="left:5px;top:103px;width:197px;height:23px;background:#008000;border-radius:8px 8px 0 0"></div>
<div class="t" style="left:29px;top:109px;font-size:12px;color:#fff;font-weight:bold;letter-spacing:-0.15px">IT Spend Report -Duration</div>
<div class="a" style="left:1598px;top:126px;width:1px;height:712px;background:#dcdcdc"></div>
<div class="a" style="left:35px;top:166px;width:144px;height:141px;background:#dcdcdc;border-radius:3px 3px 0 0;border:1px solid #d2d2d2"></div>
<div class="a" style="left:35px;top:166px;width:144px;height:20px;background:#d3d3d3;border-radius:3px 3px 0 0"></div>
<div class="t" style="left:41px;top:169px;font-size:13px;color:#2b2b2b;font-weight:bold;letter-spacing:0.2px">ITSLT_Manager</div>
<svg style="left:165px;top:169px" width="10" height="10" viewBox="0 0 10 10"><circle cx="6.5" cy="3.5" r="2.8" fill="none" stroke="#444" stroke-width="1.4"/><path d="M4.5 5.5L1 9" stroke="#444" stroke-width="1.8"/></svg>
<div class="t" style="left:38px;top:188px;font-size:11px;color:#000;font-weight:normal;letter-spacing:-0.15px">Crsfrtr&nbsp; Pblnl</div>
<div class="a" style="left:36px;top:201px;width:142px;height:15px;background:#00e400"></div>
<div class="t" style="left:38px;top:203px;font-size:11px;color:#000;font-weight:normal;letter-spacing:-0.15px">Drkriiu Knnmuvh</div>
<div class="t" style="left:38px;top:218px;font-size:11px;color:#000;font-weight:normal;letter-spacing:-0.15px">Lcbkwyk Nykpycjx</div>
<div class="t" style="left:38px;top:233px;font-size:11px;color:#000;font-weight:normal;letter-spacing:-0.15px">Padgs Mbojiyi-Ihahzw</div>
<div class="t" style="left:38px;top:248px;font-size:11px;color:#000;font-weight:normal;letter-spacing:-0.15px">Rkiqf Q Jfwml</div>
<div class="t" style="left:38px;top:263px;font-size:11px;color:#000;font-weight:normal;letter-spacing:-0.15px">Rsuu L Qnikkt</div>
<div class="t" style="left:38px;top:278px;font-size:11px;color:#000;font-weight:normal;letter-spacing:-0.15px">Xzaptkn Rzfho</div>
<div class="t" style="left:38px;top:293px;font-size:11px;color:#000;font-weight:normal;letter-spacing:-0.15px">Zeyg Esrqlg</div>
<div class="a" style="left:17px;top:353px;width:144px;height:36px;background:#fff;border:1px solid #dedede;border-radius:3px 3px 0 0"></div>
<div class="a" style="left:17px;top:353px;width:144px;height:20px;background:#e6e6e6;border-radius:3px 3px 0 0"></div>
<div class="t" style="left:22px;top:356px;font-size:12px;color:#1e1e1e;font-weight:bold;">QV USER</div>
<svg style="left:147px;top:357px" width="10" height="10" viewBox="0 0 10 10"><circle cx="6.5" cy="3.5" r="2.8" fill="none" stroke="#444" stroke-width="1.4"/><path d="M4.5 5.5L1 9" stroke="#444" stroke-width="1.8"/></svg>
<div class="t" style="left:151px;top:375px;font-size:11px;color:#222;font-weight:normal;">3</div>
<div class="a" style="left:246px;top:210px;width:667px;height:311px;background:#fff;border:1px solid #2a1ec8;border-top:none;border-radius:3px 3px 0 0"></div>
<div class="a" style="left:246px;top:210px;width:667px;height:20px;background:#2a1ec8;border-radius:3px 3px 0 0"></div>
<div class="t" style="left:252px;top:213px;font-size:13px;color:#fff;font-weight:bold;letter-spacing:0.45px"># Contingent Workers by Length Of Service</div>
<svg style="left:838px;top:213px" width="11" height="11" viewBox="0 0 11 11"><path d="M2.5 0.5h6v6h-6z" fill="none" stroke="#fff"/><path d="M4 2.5h3M4 4.5h2" stroke="#fff"/><path d="M0.5 7.5h10v3h-10z" fill="none" stroke="#fff"/></svg><div class="t" style="left:853px;top:213px;font-size:12px;color:#fff;font-weight:normal;transform:scaleX(.8);transform-origin:0 0">XL</div><svg style="left:867px;top:212px" width="13" height="13" viewBox="0 0 13 13"><rect x="0.7" y="0.7" width="11.6" height="11.6" rx="2" fill="#5a52d8" stroke="#fff" stroke-width="1.4"/><path d="M4 3h5v1.5H6.3L8 6.5 6.3 8.5H9V10H4V9l2-2.5L4 4z" fill="#fff"/></svg>
<div class="a" style="left:883px;top:221px;width:8px;height:3px;background:#fff"></div>
<svg style="left:899px;top:214px" width="11" height="11" viewBox="0 0 11 11"><rect x="0.75" y="0.75" width="9.5" height="9.5" fill="none" stroke="#fff" stroke-width="1.5"/><rect x="0" y="0" width="11" height="3.2" fill="#fff"/></svg>
<div class="t" style="left:257px;top:238px;font-size:13px;color:#000;font-weight:bold;letter-spacing:0px">As Of :Jul 2015</div>
<div class="a" style="left:292px;top:290px;width:611px;height:1px;background:repeating-linear-gradient(90deg,#d6d6d6 0,#d6d6d6 3px,transparent 3px,transparent 5px)"></div>
<div class="t" style="left:266px;top:285px;font-size:12px;color:#333;font-weight:normal;">2.0</div>
<div class="a" style="left:292px;top:333px;width:611px;height:1px;background:repeating-linear-gradient(90deg,#d6d6d6 0,#d6d6d6 3px,transparent 3px,transparent 5px)"></div>
<div class="t" style="left:266px;top:328px;font-size:12px;color:#333;font-weight:normal;">1.5</div>
<div class="a" style="left:292px;top:376px;width:611px;height:1px;background:repeating-linear-gradient(90deg,#d6d6d6 0,#d6d6d6 3px,transparent 3px,transparent 5px)"></div>
<div class="t" style="left:266px;top:371px;font-size:12px;color:#333;font-weight:normal;">1.0</div>
<div class="a" style="left:292px;top:419px;width:611px;height:1px;background:repeating-linear-gradient(90deg,#d6d6d6 0,#d6d6d6 3px,transparent 3px,transparent 5px)"></div>
<div class="t" style="left:266px;top:414px;font-size:12px;color:#333;font-weight:normal;">0.5</div>
<div class="a" style="left:292px;top:462px;width:611px;height:1px;background:repeating-linear-gradient(90deg,#d6d6d6 0,#d6d6d6 3px,transparent 3px,transparent 5px)"></div>
<div class="t" style="left:266px;top:457px;font-size:12px;color:#333;font-weight:normal;">0.0</div>
<div class="a" style="left:598px;top:237px;width:1px;height:53px;background:repeating-linear-gradient(180deg,#d8d8d8 0,#d8d8d8 3px,transparent 3px,transparent 5px)"></div>
<div class="a" style="left:508px;top:290px;width:180px;height:172px;background:#8da8c9"></div>
<div class="t" style="left:594px;top:275px;font-size:12px;color:#222;font-weight:normal;">2</div>
<div class="t" style="left:553px;top:483px;font-size:12px;color:#333;font-weight:normal;transform:rotate(-45deg);transform-origin:50% 50%">0-6 Month</div>
<div class="a" style="left:246px;top:523px;width:809px;height:94px;background:#fff;border:1px solid #2a1ec8;border-top:none;border-radius:3px 3px 0 0"></div>
<div class="a" style="left:246px;top:523px;width:809px;height:20px;background:#2a1ec8;border-radius:3px 3px 0 0"></div>
<div class="t" style="left:251px;top:526px;font-size:13px;color:#fff;font-weight:bold;letter-spacing:0.44px">Contingent Workers sorted by Days of service and Spend</div>
<svg style="left:996px;top:527px" width="11" height="11" viewBox="0 0 11 11"><path d="M2.5 0.5h6v6h-6z" fill="none" stroke="#fff"/><path d="M4 2.5h3M4 4.5h2" stroke="#fff"/><path d="M0.5 7.5h10v3h-10z" fill="none" stroke="#fff"/></svg>
<div class="t" style="left:1011px;top:527px;font-size:12px;color:#fff;font-weight:normal;transform:scaleX(.8);transform-origin:0 0">XL</div>
<div class="a" style="left:1025px;top:534px;width:8px;height:3px;background:#fff"></div>
<svg style="left:1041px;top:527px" width="11" height="11" viewBox="0 0 11 11"><rect x="0.75" y="0.75" width="9.5" height="9.5" fill="none" stroke="#fff" stroke-width="1.5"/><rect x="0" y="0" width="11" height="3.2" fill="#fff"/></svg>
<div class="a" style="left:247px;top:543px;width:807px;height:28px;background:#f2f2f2"></div>
<div class="a" style="left:247px;top:571px;width:807px;height:15px;background:#f2f2f2"></div>
<div class="a" style="left:247px;top:586px;width:807px;height:15px;background:#fff"></div>
<div class="a" style="left:247px;top:601px;width:807px;height:15px;background:#f2f2f2"></div>
<div class="a" style="left:247px;top:570px;width:807px;height:1px;background:#d9d9d9"></div>
<div class="a" style="left:247px;top:585px;width:807px;height:1px;background:#d9d9d9"></div>
<div class="a" style="left:247px;top:600px;width:807px;height:1px;background:#d9d9d9"></div>
<div class="a" style="left:402px;top:542px;width:1px;height:29px;background:#d9d9d9"></div>
<div class="a" style="left:402px;top:586px;width:1px;height:30px;background:#d9d9d9"></div>
<div class="a" style="left:524px;top:542px;width:1px;height:29px;background:#d9d9d9"></div>
<div class="a" style="left:524px;top:586px;width:1px;height:30px;background:#d9d9d9"></div>
<div class="a" style="left:632px;top:542px;width:1px;height:29px;background:#d9d9d9"></div>
<div class="a" style="left:632px;top:586px;width:1px;height:30px;background:#d9d9d9"></div>
<div class="a" style="left:728px;top:542px;width:1px;height:29px;background:#d9d9d9"></div>
<div class="a" style="left:728px;top:586px;width:1px;height:30px;background:#d9d9d9"></div>
<div class="a" style="left:824px;top:542px;width:1px;height:29px;background:#d9d9d9"></div>
<div class="a" style="left:824px;top:586px;width:1px;height:30px;background:#d9d9d9"></div>
<div class="a" style="left:957px;top:542px;width:1px;height:29px;background:#d9d9d9"></div>
<div class="a" style="left:957px;top:586px;width:1px;height:30px;background:#d9d9d9"></div>
<div class="a" style="left:824px;top:571px;width:1px;height:15px;background:#d9d9d9"></div>
<div class="a" style="left:957px;top:571px;width:1px;height:15px;background:#d9d9d9"></div>
<div class="t" style="left:248px;top:551px;font-size:12px;color:#2a2a2a;font-weight:bold;">Worker Name</div>
<div class="t" style="left:404px;top:551px;font-size:12px;color:#2a2a2a;font-weight:bold;letter-spacing:-0.3px">Job Posting Title</div>
<div class="t" style="left:526px;top:551px;font-size:12px;color:#2a2a2a;font-weight:bold;">Start Date</div>
<div class="t" style="left:634px;top:551px;font-size:12px;color:#2a2a2a;font-weight:bold;">End Date</div>
<div class="t" style="left:730px;top:551px;font-size:12px;color:#2a2a2a;font-weight:bold;">Total Spend</div>
<div class="t" style="left:826px;top:551px;font-size:12px;color:#2a2a2a;font-weight:bold;letter-spacing:-0.5px;transform:scaleX(.93);transform-origin:0 0">YEAR TO DATE</div>
<div class="t" style="left:959px;top:551px;font-size:12px;color:#2a2a2a;font-weight:bold;">Bill Rate</div>
<svg style="left:392px;top:553px" width="10" height="10" viewBox="0 0 10 10"><path d="M0.5 8.5L4.5 0.5L8.5 8.5" fill="none" stroke="#c8c8c8"/><path d="M0.5 8.5h8" stroke="#8a8a8a"/></svg>
<div class="t" style="left:860px;top:572px;font-size:12px;color:#000;font-weight:bold;letter-spacing:0.2px">$11,437.55</div>
<div class="t" style="left:248px;top:588px;font-size:11px;color:#1a1a1a;font-weight:normal;">Pugh, Oliver</div>
<div class="t" style="left:404px;top:588px;font-size:11px;color:#1a1a1a;font-weight:normal;">IT Intern - non CA</div>
<div class="t" style="left:525px;width:108px;text-align:center;top:588px;font-size:11px;color:#1a1a1a">6/1/2015</div>
<div class="t" style="left:633px;width:96px;text-align:center;top:588px;font-size:11px;color:#1a1a1a">8/14/2015</div>
<div class="t" style="left:729px;width:96px;text-align:center;top:588px;font-size:11px;color:#1a1a1a">6809.150000</div>
<div class="t" style="left:825px;width:133px;text-align:center;top:588px;font-size:11px;color:#1a1a1a">$5,941.55</div>
<div class="t" style="left:958px;width:96px;text-align:center;top:588px;font-size:11px;color:#1a1a1a">21.69</div>
<div class="t" style="left:248px;top:603px;font-size:11px;color:#1a1a1a;font-weight:normal;">Schott, Lindsey</div>
<div class="t" style="left:404px;top:603px;font-size:11px;color:#1a1a1a;font-weight:normal;">IT Intern - non CA</div>
<div class="t" style="left:525px;width:108px;text-align:center;top:603px;font-size:11px;color:#1a1a1a">6/8/2015</div>
<div class="t" style="left:633px;width:96px;text-align:center;top:603px;font-size:11px;color:#1a1a1a">8/7/2015</div>
<div class="t" style="left:729px;width:96px;text-align:center;top:603px;font-size:11px;color:#1a1a1a">5496.000000</div>
<div class="t" style="left:825px;width:133px;text-align:center;top:603px;font-size:11px;color:#1a1a1a">$5,496.00</div>
<div class="t" style="left:958px;width:96px;text-align:center;top:603px;font-size:11px;color:#1a1a1a">22.90</div>
<div class="t" style="left:1174px;top:772px;font-size:12px;color:#ff8000;font-weight:bold;letter-spacing:-0.1px">Note:Tafin went LIVE 2013</div>
<div class="a" style="left:0px;top:838px;width:1599px;height:1px;background:#dcdcdc"></div>
<div class="a" style="left:0px;top:839px;width:1600px;height:21px;background:#f0f0f0"></div>
<div class="t" style="left:3px;top:845px;font-size:12px;color:#000;font-weight:normal;letter-spacing:-0.25px">Pulse F1 para ver la Ayuda</div>
<div class="a" style="left:1392px;top:842px;width:127px;height:18px;border:1px solid #dadada;border-bottom:none"></div>
<div class="a" style="left:1521px;top:842px;width:8px;height:18px;border:1px solid #dadada;border-bottom:none"></div>
<div class="a" style="left:1531px;top:842px;width:39px;height:18px;border:1px solid #dadada;border-bottom:none"></div>
<div class="a" style="left:1572px;top:842px;width:8px;height:18px;border:1px solid #dadada;border-bottom:none"></div>
<div class="a" style="left:1582px;top:842px;width:10px;height:18px;border:1px solid #dadada;border-bottom:none"></div>
<div class="a" style="left:1593px;top:842px;width:7px;height:18px;border:1px solid #dadada;border-bottom:none"></div>
<div class="t" style="left:1394px;top:845px;font-size:12px;color:#000;font-weight:normal;letter-spacing:-0.25px">8/19/2015 12:59:13 AM</div>
<div class="t" style="left:1534px;top:845px;font-size:12px;color:#000;font-weight:normal;">D: 1/8</div>
<svg style="left:1584px;top:844px" width="11" height="11" viewBox="0 0 11 11"><defs><radialGradient id="gd" cx=".4" cy=".35" r=".6"><stop offset="0" stop-color="#b0ffb0"/><stop offset=".45" stop-color="#10d010"/><stop offset="1" stop-color="#007000"/></radialGradient></defs><circle cx="5.5" cy="5.5" r="4.8" fill="url(#gd)" stroke="#404040" stroke-width=".8"/></svg>
<div class="a" style="left:0px;top:860px;width:1600px;height:40px;background:linear-gradient(90deg,#5a5a5a 0,#5e5e5e 56px,#7e7e7e 60px,#8c8c8c 300px,#939393 550px,#8e8e8e 750px,#9a9a9a 860px,#8e8e8e 890px,#6c6c6c 915px,#666 980px,#6e6e6e 1010px,#888 1045px,#7a7a7a 1080px,#747474 1300px,#6e6e6e 1500px,#727272 1600px)"></div>
<div class="a" style="left:0px;top:860px;width:1600px;height:1px;background:#1e1e1e"></div>
<div class="a" style="left:0px;top:861px;width:1600px;height:1px;background:rgba(255,255,255,.55)"></div>
<div class="a" style="left:0px;top:862px;width:1600px;height:38px;background:linear-gradient(180deg,rgba(255,255,255,.06),rgba(0,0,0,.05))"></div>
<svg style="left:8px;top:862px" width="38" height="37" viewBox="0 0 38 37"><defs><linearGradient id="orbt" x1="0" y1="0" x2="0" y2="1"><stop offset="0" stop-color="#e0ecf4"/><stop offset=".45" stop-color="#7898b8"/><stop offset=".5" stop-color="#0a4a80"/><stop offset=".8" stop-color="#0a6aa8"/><stop offset="1" stop-color="#10e0ff"/></linearGradient></defs><circle cx="19" cy="18.5" r="18" fill="url(#orbt)" stroke="#0a3a6a" stroke-width="1.2"/><circle cx="19" cy="18.5" r="18.6" fill="none" stroke="#b8a8a0" stroke-width=".6"/><path d="M10.5 8.5c3-1.5 5.5-1.5 8.5 0l-1.5 9c-3-1.5-5.5-1.5-8.5 0z" fill="#e8501a"/><path d="M19.5 10c3 1.5 6 1.5 9.5 0l-1.5 8.5c-3 1.5-6 1.5-9.5 0z" fill="#8cc040"/><path d="M8.5 18.5c3-1.5 5.5-1.5 8.5 0l-1.5 9c-3-1.5-5.5-1.5-8.5 0z" fill="#38a0e8"/><path d="M17.5 20c3 1.5 6 1.5 9.5 0l-1.5 8.5c-3 1.5-6 1.5-9.5 0z" fill="#f8b820"/></svg>
<div class="a" style="left:60px;top:861px;width:58px;height:39px;background:linear-gradient(160deg,#b4b4b4 0,#9c9c9c 35%,#858585 45%,#929292 100%);border:1px solid #3a3a3a;border-radius:3px;box-shadow:inset 0 0 0 1px rgba(255,255,255,.45)"></div>
<div class="a" style="left:122px;top:861px;width:58px;height:39px;background:linear-gradient(160deg,#b4b4b4 0,#9c9c9c 35%,#858585 45%,#929292 100%);border:1px solid #3a3a3a;border-radius:3px;box-shadow:inset 0 0 0 1px rgba(255,255,255,.45)"></div>
<div class="a" style="left:184px;top:861px;width:58px;height:39px;background:linear-gradient(160deg,#b4b4b4 0,#9c9c9c 35%,#858585 45%,#929292 100%);border:1px solid #3a3a3a;border-radius:3px;box-shadow:inset 0 0 0 1px rgba(255,255,255,.45)"></div>
<div class="a" style="left:246px;top:861px;width:58px;height:39px;background:linear-gradient(160deg,#b4b4b4 0,#9c9c9c 35%,#858585 45%,#929292 100%);border:1px solid #3a3a3a;border-radius:3px;box-shadow:inset 0 0 0 1px rgba(255,255,255,.45)"></div>
<div class="a" style="left:308px;top:861px;width:58px;height:39px;background:linear-gradient(160deg,#dcdcdc 0,#c8c8c8 35%,#b4b4b4 45%,#bcbcbc 100%);border:1px solid #3a3a3a;border-radius:3px;box-shadow:inset 0 0 0 1px rgba(255,255,255,.45)"></div>
<div class="a" style="left:370px;top:861px;width:58px;height:39px;background:linear-gradient(160deg,#b4b4b4 0,#9c9c9c 35%,#858585 45%,#929292 100%);border:1px solid #3a3a3a;border-radius:3px;box-shadow:inset 0 0 0 1px rgba(255,255,255,.45)"></div>
<div class="a" style="left:432px;top:861px;width:58px;height:39px;background:linear-gradient(160deg,#b4b4b4 0,#9c9c9c 35%,#858585 45%,#929292 100%);border:1px solid #3a3a3a;border-radius:3px;box-shadow:inset 0 0 0 1px rgba(255,255,255,.45)"></div>
<div class="a" style="left:494px;top:861px;width:58px;height:39px;background:linear-gradient(160deg,#b4b4b4 0,#9c9c9c 35%,#858585 45%,#929292 100%);border:1px solid #3a3a3a;border-radius:3px;box-shadow:inset 0 0 0 1px rgba(255,255,255,.45)"></div>
<svg style="left:73px;top:864px" width="30" height="29" viewBox="0 0 30 29"><defs><linearGradient id="olg" x1="0" y1="0" x2="1" y2="1"><stop offset="0" stop-color="#fff4c0"/><stop offset=".5" stop-color="#f8d040"/><stop offset="1" stop-color="#f0a020"/></linearGradient></defs><path d="M6 0.5h22.5v28H0.5V6z" fill="#f09a10"/><path d="M6.5 2h20.5v25H2V6.5z" fill="url(#olg)" stroke="#fff" stroke-width="1.2"/><path d="M9 20l16-6v11H11z" fill="#fff" stroke="#e8a040" stroke-width=".6"/><ellipse cx="10.5" cy="12" rx="5.5" ry="6.8" fill="none" stroke="#e87a10" stroke-width="4"/><circle cx="25" cy="13" r="4.5" fill="#fff8d8" stroke="#f0c060" stroke-width=".8"/><path d="M23.5 10.5l1.5 3 2-1" stroke="#d04010" fill="none" stroke-width=".9"/></svg>
<svg style="left:136px;top:864px" width="32" height="32" viewBox="0 0 32 32"><circle cx="16" cy="15.5" r="15" fill="#2a64c0"/><path d="M6 6c4-5 14-5 19 0-6-2-12 0-15 4z" fill="#70b8f4"/><path d="M22 6a12 12 0 0 1 6 14l-5-1a7 7 0 0 0-2-9z" fill="#4a90e0"/><path d="M2 20l5-2 2 10z" fill="#9a9a9a"/><path d="M4.5 17.5l10.5-7 9 6.5-3 10.5-14-2.5z" fill="#efebe4" stroke="#8a8478" stroke-width=".7"/><path d="M5 17.5l8.5 5.5 10.5-6" fill="none" stroke="#9a9488" stroke-width=".7"/><path d="M7 10l4-3 3 3-4 3z" fill="#1a4a9a"/></svg>
<svg style="left:198px;top:865px" width="30" height="30" viewBox="0 0 30 30"><circle cx="15" cy="15" r="14" fill="#e8b818"/><path d="M15 1a14 14 0 0 1 12.1 7H15a7 7 0 0 0-6.1 3.5L3 5.5A14 14 0 0 1 15 1z" fill="#d83a2a"/><path d="M3 5.5l5.9 10.5a7 7 0 0 0 6.1 3.5L9 29A14 14 0 0 1 3 5.5z" fill="#2a9a3a"/><circle cx="15" cy="15" r="6.5" fill="#fff"/><circle cx="15" cy="15" r="5" fill="#3a7ad8"/></svg>
<svg style="left:260px;top:864px" width="31" height="31" viewBox="0 0 31 31"><defs><radialGradient id="ffg" cx=".5" cy=".25" r=".75"><stop offset="0" stop-color="#60c8f4"/><stop offset=".55" stop-color="#1a6ec0"/><stop offset="1" stop-color="#0a2a78"/></radialGradient><linearGradient id="ffo" x1="1" y1="0" x2="0" y2="1"><stop offset="0" stop-color="#ffe020"/><stop offset=".4" stop-color="#f88a20"/><stop offset="1" stop-color="#d83a18"/></linearGradient></defs><circle cx="16" cy="14" r="12.5" fill="url(#ffg)"/><path d="M7 6c-3 3-4.5 8-3.5 12.5" stroke="url(#ffo)" stroke-width="0" fill="none"/><path d="M4 3c-3 4-4 10-2 15 3 8 11 12 19 10 6-2 9.5-8 9-14-.3-3-1.5-6-3.5-8 1 4 .5 9-2 12-3 4-8 5-12 3 3-.5 5-2 5.5-3.5-3 .5-6-.5-7.5-2.5-1-1.5-1-3 .5-4.5-1-.5-1.5-2-1-3.5C9 7 10 5.5 10.5 4.5 8 5 6.5 6.5 6 7.5 5 6 4.5 4.5 4 3z" fill="url(#ffo)"/></svg>
<svg style="left:322px;top:864px" width="31" height="31" viewBox="0 0 31 31"><defs><radialGradient id="qsph" cx=".45" cy=".35" r=".65"><stop offset="0" stop-color="#fafafa"/><stop offset=".7" stop-color="#e0dde2"/><stop offset="1" stop-color="#b8b8b8"/></radialGradient></defs><circle cx="15" cy="15" r="14.6" fill="url(#qsph)" stroke="#aaa" stroke-width=".6"/><circle cx="15" cy="15.5" r="8.7" fill="none" stroke="#2a9a1a" stroke-width="4.4"/><circle cx="15" cy="15.5" r="4" fill="#303030"/><path d="M21 21.5l4 3.5" stroke="#1a8a10" stroke-width="3.4"/></svg>
<svg style="left:383px;top:864px" width="32" height="32" viewBox="0 0 32 32"><circle cx="10" cy="10" r="8" fill="#12a6e6"/><circle cx="22" cy="22" r="8" fill="#12a6e6"/><circle cx="16" cy="16" r="12.5" fill="#12a6e6"/><path d="M21.5 10.5c-1.2-2-3.2-3-5.8-3-3.4 0-5.7 1.7-5.7 4.3 0 5.5 11 3.3 11 7.8 0 1.8-1.8 3-4.5 3s-4.6-1.2-5.6-3.2" fill="none" stroke="#fff" stroke-width="3.6" stroke-linecap="round"/></svg>
<svg style="left:444px;top:866px" width="34" height="31" viewBox="0 0 34 31"><path d="M2 3h9l1 1.5h8V9H2z" fill="#f4e4a8" stroke="#c8a050" stroke-width=".7"/><rect x="4.5" y="2" width="3.5" height="2" fill="#2aa02a"/><path d="M8 5h10l1 1.5h7V10H8z" fill="#f8f0d0" stroke="#c8a050" stroke-width=".7"/><rect x="12" y="5.5" width="3" height="2" fill="#d22"/><path d="M17 8h14v4H17z" fill="#fff" stroke="#c8a050" stroke-width=".7"/><rect x="19" y="9" width="2.5" height="2" fill="#2a80e0"/><path d="M1.5 11h30v17h-30z" fill="#f8e8a0" stroke="#c8a050" stroke-width=".7"/><path d="M1.5 11h30v4h-30z" fill="#fcf2c8"/><path d="M4.5 29v-10h23v10h-5.5v-5h-12v5z" fill="#a0d4f0" stroke="#5a9ac8" stroke-width=".8"/></svg>
<svg style="left:506px;top:864px" width="33" height="32" viewBox="0 0 33 32"><path d="M3 19c-1-8 7-13 15-12 7 1 10 6 8 11-1.5 3-5 2-6 5-1 2.5 2 5-2 6.5-6 2-14-2-15-10.5z" fill="#cfe6f6" stroke="#6aa0c8" stroke-width=".8"/><circle cx="8" cy="18" r="2.2" fill="#e83a2a"/><circle cx="11.5" cy="12.5" r="2.2" fill="#40a840"/><circle cx="17.5" cy="10" r="2.2" fill="#f0a020"/><circle cx="13" cy="20" r="1.8" fill="#8aa0b0"/><path d="M14 30l13-20" stroke="#e88020" stroke-width="2.6"/><path d="M26 10l2-3" stroke="#888" stroke-width="2"/><path d="M27 7l2.5-5.5 3 2.5-4 4z" fill="#d8a060"/></svg>
<div class="a" style="left:1060px;top:862px;width:61px;height:38px;background:linear-gradient(180deg,#8c8c8c 0,#7a7a7a 40%,#6a6a6a 100%);border-radius:10px 0 0 0;border-top:1px solid #a8a8a8;border-left:1px solid #a0a0a0;border-right:1px solid #4a4a4a"></div>
<div class="a" style="left:1153px;top:862px;width:93px;height:38px;background:linear-gradient(180deg,#8c8c8c 0,#7a7a7a 40%,#6a6a6a 100%);border-radius:10px 0 0 0;border-top:1px solid #a8a8a8;border-left:1px solid #a0a0a0;border-right:1px solid #4a4a4a"></div>
<div class="a" style="left:1251px;top:862px;width:99px;height:38px;background:linear-gradient(180deg,#8c8c8c 0,#7a7a7a 40%,#6a6a6a 100%);border-radius:10px 0 0 0;border-top:1px solid #a8a8a8;border-left:1px solid #a0a0a0;border-right:1px solid #4a4a4a"></div>
<svg style="left:1076px;top:865px" width="31" height="31" viewBox="0 0 31 31"><defs><radialGradient id="rd" cx=".3" cy=".3" r=".8"><stop offset="0" stop-color="#ff9a9a"/><stop offset=".35" stop-color="#e82020"/><stop offset=".8" stop-color="#a00808"/><stop offset="1" stop-color="#c02a2a"/></radialGradient></defs><circle cx="15.5" cy="15.5" r="15" fill="url(#rd)"/><circle cx="15.5" cy="15.5" r="2" fill="#fff"/><g transform="rotate(20 15.5 15.5)" stroke="#fff" stroke-width="2.4" fill="none" stroke-linecap="butt"><path d="M12 6v6H6"/><path d="M19 6v6h6"/><path d="M12 25v-6H6"/><path d="M19 25v-6h6"/></g></svg>
<div class="t" style="left:1128px;top:873px;font-size:12px;color:#f4f4f4;font-weight:normal;letter-spacing:-0.3px">ES</div>
<svg style="left:1157px;top:872px" width="44" height="19" viewBox="0 0 44 19"><defs><linearGradient id="sg" x1="0" y1="0" x2="0" y2="1"><stop offset="0" stop-color="#20b050"/><stop offset="1" stop-color="#087a28"/></linearGradient></defs><path d="M0 18.5V12.5h8.5V9h8V6h8V3h8V0h11v18.5z" fill="#fff"/><path d="M1.2 17.3V13.7h8.5V10.2h8V7.2h8V4.2h8V1.2h8.6v16.1z" fill="#000"/><rect x="2.2" y="14.6" width="7" height="1.8" fill="url(#sg)"/><rect x="10.6" y="11.1" width="6.6" height="5.3" fill="url(#sg)"/><rect x="18.6" y="8.1" width="6.6" height="8.3" fill="url(#sg)"/><rect x="26.6" y="5.1" width="6.6" height="11.3" fill="url(#sg)"/><rect x="34.6" y="2.1" width="6.8" height="14.3" fill="url(#sg)"/></svg>
<svg style="left:1213px;top:872px" width="17" height="17" viewBox="0 0 17 17"><path d="M7.5 7l-2 9h5l-2-9z" fill="#fff"/><circle cx="8" cy="6" r="1.5" fill="#fff"/><path d="M5 3c-1.5 1.5-1.5 4.5 0 6M11 3c1.5 1.5 1.5 4.5 0 6M3 1.5c-2.5 2.5-2.5 7 0 9M13 1.5c2.5 2.5 2.5 7 0 9" stroke="#fff" stroke-width="1.1" fill="none"/></svg>
<svg style="left:1265px;top:870px" width="47" height="21" viewBox="0 0 47 21"><defs><linearGradient id="bt" x1="0" y1="0" x2="0" y2="1"><stop offset="0" stop-color="#22b04a"/><stop offset=".6" stop-color="#0e8a34"/><stop offset="1" stop-color="#06661e"/></linearGradient></defs><path d="M0 0h42.5v5h4v11h-4v5H0z" fill="#fff"/><path d="M1 1h40.5v5h4v9h-4v5H1z" fill="#000"/><rect x="2" y="2" width="38.5" height="17" fill="url(#bt)"/></svg>
<div class="t" style="left:1275px;top:874px;font-size:12px;color:#fffce8;font-weight:normal;letter-spacing:0px">99%</div>
<svg style="left:1319px;top:873px" width="18" height="14" viewBox="0 0 18 14"><rect x="9" y="2.3" width="7.5" height="3" fill="#000" stroke="#fff" stroke-width="1.1"/><rect x="9" y="8.7" width="7.5" height="3" fill="#000" stroke="#fff" stroke-width="1.1"/><path d="M7 0.8H11V13.2H7A6.2 6.2 0 0 1 7 0.8z" fill="#000" stroke="#fff" stroke-width="1.2"/><rect x="9.5" y="3" width="2" height="2" fill="#000"/><rect x="9.5" y="9.2" width="2" height="2" fill="#000"/><path d="M5.5 3.5a3.5 3.5 0 0 0-2 3" stroke="#fff" stroke-width=".6" fill="none"/></svg>
<svg style="left:1355px;top:879px" width="11" height="6" viewBox="0 0 11 6"><path d="M0.5 5.5L5.5 0.5l5 5z" fill="#e8eaf4" stroke="#9090a0" stroke-width=".5"/></svg>
<svg style="left:1376px;top:872px" width="18" height="17" viewBox="0 0 18 17"><path d="M2 1v16" stroke="#fff" stroke-width="1.6"/><path d="M3 2c3-1 5 1 7 1s3-1 5-1v7c-2 0-3 1-5 1s-4-2-7-1z" fill="#fff" stroke="#808080" stroke-width=".5"/></svg>
<svg style="left:1400px;top:874px" width="18" height="13" viewBox="0 0 18 13"><rect x="0.5" y="10" width="2.5" height="2.5" fill="#fff"/><rect x="4" y="8" width="2.5" height="4.5" fill="#fff"/><rect x="7.5" y="5.5" width="2.5" height="7" fill="#fff"/><rect x="11" y="3" width="2.5" height="9.5" fill="#fff"/><rect x="14.5" y="0.5" width="2.5" height="12" fill="#c8c8c8"/></svg>
<svg style="left:1426px;top:873px" width="15" height="16" viewBox="0 0 15 16"><path d="M1 5h3l5-4v14l-5-4H1z" fill="#fff" stroke="#888" stroke-width=".5"/><path d="M11.5 5.5c1 1.5 1 3.5 0 5" stroke="#fff" fill="none"/></svg>
<svg style="left:1448px;top:872px" width="18" height="17" viewBox="0 0 18 17"><path d="M1 4l4-3 4 3-4 3zM9 4l4-3 4 3-4 3zM1 10l4-3 4 3-4 3zM9 10l4-3 4 3-4 3zM5 14l4-3 4 3-4 3z" fill="#fff" stroke="#333" stroke-width=".6"/><circle cx="13" cy="12.5" r="4.5" fill="#2aa02a" stroke="#fff" stroke-width=".8"/><path d="M10.8 12.5l1.5 1.5 3-3" stroke="#fff" fill="none" stroke-width="1.2"/></svg>
<svg style="left:1472px;top:872px" width="18" height="16" viewBox="0 0 18 16"><path d="M6 1h6l6 10h-6z" fill="#f8c820"/><path d="M6 1L0 11l3 5 6-10z" fill="#1aa050"/><path d="M3 16h12l3-5H6z" fill="#3a80f0"/></svg>
<div class="t" style="left:1523px;top:867px;font-size:12px;color:#fff;font-weight:normal;letter-spacing:-0.5px">22:17</div>
<div class="t" style="left:1506px;top:884px;font-size:12px;color:#fff;font-weight:normal;letter-spacing:-0.2px">18/08/2015</div>
<div class="a" style="left:1577px;top:861px;width:23px;height:39px;background:linear-gradient(160deg,#a0a0a0 0,#8a8a8a 40%,#6a6a6a 60%,#707070 100%);border:1px solid #c0c0c0;border-right:none;box-shadow:inset 0 0 0 1px #505050"></div></body></html>
